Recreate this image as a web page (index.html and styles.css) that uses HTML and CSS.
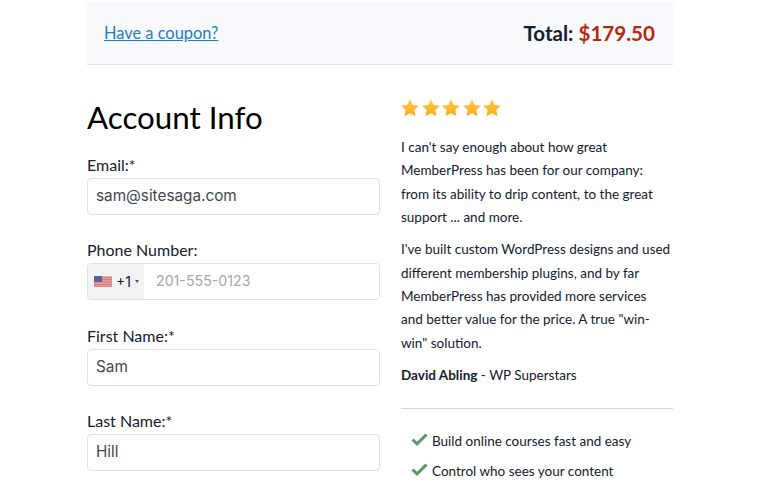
FILE: index.html

```html
<!DOCTYPE html>
<html lang="en">
<head>
    <meta charset="UTF-8">
    <meta name="viewport" content="width=device-width, initial-scale=1.0">
    <title>Checkout</title>
    <link rel="stylesheet" href="styles.css">
</head>
<body>
    <div class="checkout">
        <div class="topBar">
            <a class="couponLink" href="#">Have a coupon?</a>
            <div class="total">Total: <span class="price">$179.50</span></div>
        </div>

        <div class="columns">
            <form class="account">
                <h1>Account Info</h1>

                <div class="field">
                    <label>Email:*</label>
                    <input class="textInput" type="text" value="sam@sitesaga.com">
                </div>

                <div class="field">
                    <label>Phone Number:</label>
                    <div class="phoneInput">
                        <div class="dialCode">
                            <svg class="flag" width="18" height="11" viewBox="0 0 18 11">
                                <rect width="18" height="11" fill="#e8b4b4"/>
                                <path d="M0 1.7h18M0 3.4h18M0 5.1h18M0 6.8h18M0 8.5h18M0 10.2h18" stroke="#d9686c" stroke-width="0.85"/>
                                <rect width="8" height="6" fill="#5f5f96"/>
                            </svg>
                            <span>+1</span>
                            <span class="caret"></span>
                        </div>
                        <input class="phoneNumber" type="text" placeholder="201-555-0123">
                    </div>
                </div>

                <div class="field">
                    <label>First Name:*</label>
                    <input class="textInput" type="text" value="Sam">
                </div>

                <div class="field">
                    <label>Last Name:*</label>
                    <input class="textInput" type="text" value="Hill">
                </div>
            </form>

            <div class="sidebar">
                <div class="stars">
                    <svg width="20" height="20" viewBox="0 0 24 24">
                        <defs>
                            <linearGradient id="starFill" x1="0" y1="0" x2="0" y2="1">
                                <stop offset="0" stop-color="#ffcb3c"/>
                                <stop offset="1" stop-color="#fca91f"/>
                            </linearGradient>
                        </defs>
                        <path fill="url(#starFill)" d="M12 1.5l3.2 6.9 7.5.9-5.5 5.2 1.4 7.5-6.6-3.7-6.6 3.7 1.4-7.5-5.5-5.2 7.5-.9z"/>
                    </svg>
                    <svg width="20" height="20" viewBox="0 0 24 24"><path fill="url(#starFill)" d="M12 1.5l3.2 6.9 7.5.9-5.5 5.2 1.4 7.5-6.6-3.7-6.6 3.7 1.4-7.5-5.5-5.2 7.5-.9z"/></svg>
                    <svg width="20" height="20" viewBox="0 0 24 24"><path fill="url(#starFill)" d="M12 1.5l3.2 6.9 7.5.9-5.5 5.2 1.4 7.5-6.6-3.7-6.6 3.7 1.4-7.5-5.5-5.2 7.5-.9z"/></svg>
                    <svg width="20" height="20" viewBox="0 0 24 24"><path fill="url(#starFill)" d="M12 1.5l3.2 6.9 7.5.9-5.5 5.2 1.4 7.5-6.6-3.7-6.6 3.7 1.4-7.5-5.5-5.2 7.5-.9z"/></svg>
                    <svg width="20" height="20" viewBox="0 0 24 24"><path fill="url(#starFill)" d="M12 1.5l3.2 6.9 7.5.9-5.5 5.2 1.4 7.5-6.6-3.7-6.6 3.7 1.4-7.5-5.5-5.2 7.5-.9z"/></svg>
                </div>

                <p>I can't say enough about how great<br>MemberPress has been for our company:<br>from its ability to drip content, to the great<br>support ... and more.</p>
                <p>I've built custom WordPress designs and used<br>different membership plugins, and by far<br>MemberPress has provided more services<br>and better value for the price. A true "win-<br>win" solution.</p>
                <p><strong>David Abling</strong> - WP Superstars</p>

                <hr class="divider">

                <ul class="benefits">
                    <li>
                        <svg width="17" height="13" viewBox="0 0 17 13"><path d="M1.5 6.5l4.6 4.4L15.5 1.5" fill="none" stroke="#559a63" stroke-width="3"/></svg>
                        Build online courses fast and easy
                    </li>
                    <li>
                        <svg width="17" height="13" viewBox="0 0 17 13"><path d="M1.5 6.5l4.6 4.4L15.5 1.5" fill="none" stroke="#559a63" stroke-width="3"/></svg>
                        Control who sees your content
                    </li>
                </ul>
            </div>
        </div>
    </div>
</body>
</html>
```

FILE: styles.css

```css
html, body {
    height: 488px;
    overflow: hidden;
}

body {
    font-family: Lato, "Open Sans", sans-serif;
    color: #14202e;
    background-color: white;
    margin: 0;
}

.checkout {
    width: 586px;
    margin: 2px 0 0 87px;
}

.topBar {
    display: flex;
    justify-content: space-between;
    align-items: center;
    height: 62px;
    padding: 0 18px 0 17px;
    background-color: #f8f9fd;
    border-bottom: 1px solid #d8e3f2;
}

.couponLink {
    font-size: 16.4px;
    color: #1a7fc4;
    margin-top: -2px;
}

.total {
    font-size: 20.6px;
    font-weight: 700;
}

.price {
    color: #b12a0c;
}

.columns {
    display: flex;
    justify-content: space-between;
}

.account {
    width: 293px;
}

h1 {
    font-size: 31.3px;
    font-weight: 400;
    line-height: 40px;
    color: black;
    margin: 32px 0 17px;
}

.field {
    margin-bottom: 24.3px;
}

.field label {
    display: block;
    font-size: 16px;
    line-height: 22px;
    margin-bottom: 2px;
}

.textInput, .phoneInput {
    display: block;
    box-sizing: border-box;
    width: 293px;
    height: 37px;
    border: 1px solid #dbe2ee;
    border-radius: 4px;
    background-color: white;
}

.textInput {
    padding: 0 8px 2px;
    font-family: Inter, sans-serif;
    font-size: 15.3px;
    color: #3f4650;
}

.phoneInput {
    display: flex;
    overflow: hidden;
}

.dialCode {
    display: flex;
    align-items: center;
    gap: 4px;
    width: 56px;
    box-sizing: border-box;
    padding-left: 6px;
    background-color: #f3f3f3;
    font-family: Inter, sans-serif;
    font-size: 14px;
}

.caret {
    border-top: 3px solid #555;
    border-left: 2px solid transparent;
    border-right: 2px solid transparent;
}

.phoneNumber {
    flex: 1;
    min-width: 0;
    border: none;
    padding: 0 12px 2px;
    font-family: Inter, sans-serif;
    font-size: 14.2px;
}

.phoneNumber::placeholder {
    color: #a8a8a8;
}

.sidebar {
    width: 272px;
    font-size: 13.5px;
    line-height: 23.4px;
    white-space: nowrap;
}

.stars {
    display: flex;
    gap: 0.5px;
    margin: 33px 0 14px -1px;
    height: 24px;
}

.sidebar p {
    margin: 0 0 8.6px;
}

.divider {
    border: none;
    border-top: 1px solid #d9d9d9;
    margin: 21px 0 21px;
}

.benefits {
    list-style: none;
    margin: 0;
    padding: 0 0 0 10px;
}

.benefits li {
    display: flex;
    align-items: flex-start;
    gap: 4px;
    margin-bottom: 6.6px;
}

.benefits svg {
    margin-top: 3px;
}
```
